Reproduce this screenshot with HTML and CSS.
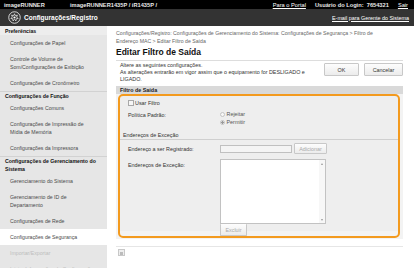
FILE: index.html
```html
<!DOCTYPE html>
<html lang="pt-br">
<head>
    <meta charset="UTF-8">
    <meta name="viewport" content="width=device-width, initial-scale=1.0">
    <title>Editar Filtro de Saída</title>
    <link rel="stylesheet" href="styles.css">
</head>
<body>
    <div class="topbar">
        <span class="model">imageRUNNER</span>
        <span class="device">imageRUNNER1435P / iR1435P /</span>
        <div class="top-links">
            <a href="#">Para o Portal</a>
            <span class="user">Usuário do Login: &nbsp;7654321</span>
            <a href="#">Sair</a>
        </div>
    </div>
    <div class="titlebar">
        <svg class="logo" width="13" height="13" viewBox="0 0 26 26">
            <circle cx="13" cy="13" r="11.5" fill="none" stroke="#fff" stroke-width="1.6"/>
            <path d="M13 5.5 L14.6 9.4 L18.8 8.2 L17.2 12.2 L20.5 15 L16.3 15.6 L15.9 19.8 L13 16.8 L10.1 19.8 L9.7 15.6 L5.5 15 L8.8 12.2 L7.2 8.2 L11.4 9.4 Z" fill="none" stroke="#fff" stroke-width="1.4" stroke-linejoin="round"/>
            <circle cx="13" cy="13" r="2.2" fill="#fff"/>
        </svg>
        <span class="app-title">Configurações/Registro</span>
        <a class="mail-link" href="#">E-mail para Gerente do Sistema</a>
    </div>

    <div class="layout">
        <nav class="sidebar">
            <div class="nav-head first">Preferências</div>
            <div class="nav-item">Configurações de Papel</div>
            <div class="nav-item">Controle de Volume de<br>Som/Configurações de Exibição</div>
            <div class="nav-item">Configurações de Cronômetro</div>
            <div class="nav-head">Configurações de Função</div>
            <div class="nav-item">Configurações Comuns</div>
            <div class="nav-item">Configurações de Impressão de<br>Mídia de Memória</div>
            <div class="nav-item">Configurações da Impressora</div>
            <div class="nav-head">Configurações de Gerenciamento do<br>Sistema</div>
            <div class="nav-item">Gerenciamento do Sistema</div>
            <div class="nav-item">Gerenciamento de ID de<br>Departamento</div>
            <div class="nav-item">Configurações de Rede</div>
            <div class="nav-item active">Configurações de Segurança</div>
            <div class="nav-item disabled">Importar/Exportar</div>
            <div class="nav-item disabled">Iniciar Informações da Configuração</div>
        </nav>

        <main class="main">
            <p class="crumbs">Configurações/Registro: Configurações de Gerenciamento do Sistema: Configurações de Segurança &gt; Filtro de<br>Endereço MAC &gt; Editar Filtro de Saída</p>
            <h1 class="page-title">Editar Filtro de Saída</h1>

            <div class="intro">
                <p>Altere as seguintes configurações.<br>As alterações entrarão em vigor assim que o equipamento for DESLIGADO e<br>LIGADO.</p>
                <div class="intro-buttons">
                    <button class="btn btn-ok">OK</button>
                    <button class="btn btn-cancel">Cancelar</button>
                </div>
            </div>

            <div class="section-bar">Filtro de Saída</div>
            <div class="section-body">
                <div class="highlight">
                    <label class="check-row"><span class="checkbox"></span>Usar Filtro</label>

                    <div class="form-row policy">
                        <span class="form-label">Política Padrão:</span>
                        <div class="radios">
                            <div class="radio-line"><span class="radio"></span>Rejeitar</div>
                            <div class="radio-line"><span class="radio checked"></span>Permitir</div>
                        </div>
                    </div>

                    <div class="sub-head">Endereços de Exceção</div>

                    <div class="form-row address">
                        <span class="form-label">Endereço a ser Registrado:</span>
                        <span class="text-input"></span>
                        <button class="btn btn-small">Adicionar</button>
                    </div>

                    <div class="form-row exceptions">
                        <span class="form-label">Endereços de Exceção:</span>
                        <div class="list-col">
                            <div class="list-box">
                                <div class="list-area"></div>
                                <div class="scroll">
                                    <span class="arrow up"></span>
                                    <span class="arrow down"></span>
                                </div>
                            </div>
                            <button class="btn btn-delete">Excluir</button>
                        </div>
                    </div>
                </div>
            </div>

            <div class="page-foot">
                <span class="top-icon"></span>
            </div>
        </main>
    </div>
</body>
</html>
```

FILE: styles.css
```css
* {
    box-sizing: border-box;
    margin: 0;
    padding: 0;
}
body {
    font-family: "Liberation Sans", Arial, sans-serif;
    font-size: 5.4px;
    color: #333;
    background-color: #fff;
    width: 414px;
    height: 268px;
    overflow: hidden;
}
a {
    color: #fff;
}

/* barra superior */
.topbar {
    height: 9px;
    background-color: #000;
    color: #e8e8e8;
    display: flex;
    align-items: center;
    padding: 0 6px 0 4px;
    font-size: 5.7px;
    font-weight: bold;
}
.model {
    width: 66px;
}
.top-links {
    margin-left: auto;
    display: flex;
    gap: 9px;
    font-weight: normal;
}
.user {
    font-weight: bold;
}
.titlebar {
    height: 17px;
    background-color: #333;
    color: #fff;
    display: flex;
    align-items: center;
    padding: 0 5px 0 8px;
}
.logo {
    margin-right: 3px;
}
.app-title {
    font-size: 6.5px;
    font-weight: bold;
}
.mail-link {
    margin-left: auto;
    font-size: 5.4px;
}

/* menu lateral */
.layout {
    display: flex;
    height: 242px;
}
.sidebar {
    width: 107px;
    flex-shrink: 0;
    background-color: #e6e6e6;
    color: #4a4a4a;
    font-size: 5.2px;
}
.nav-head {
    font-weight: bold;
    color: #111;
    line-height: 8px;
    padding: 0 2px 0 5px;
    border-top: 1px solid #d2d2d2;
}
.nav-head.first {
    border-top: none;
    padding-top: 1px;
    background-color: #ededed;
}
.nav-item {
    line-height: 8px;
    padding: 4px 2px 4px 10px;
    white-space: nowrap;
}
.nav-item.active {
    background-color: #fff;
}
.nav-item.disabled {
    color: #bdbdbd;
}

/* conteudo */
.main {
    flex: 1;
    padding: 3px 11px 0 9px;
}
.crumbs {
    color: #666;
    line-height: 8px;
    font-size: 5.2px;
}
.page-title {
    margin-top: 2px;
    font-size: 8.5px;
    color: #111;
    line-height: 11px;
    padding-bottom: 2px;
    border-bottom: 1px solid #ddd;
}
.intro {
    display: flex;
    justify-content: space-between;
    margin-top: 1px;
    padding-left: 4px;
    line-height: 7px;
}
.intro-buttons {
    display: flex;
    gap: 5px;
    padding-top: 1px;
}
.btn {
    font-family: "Liberation Sans", Arial, sans-serif;
    font-size: 5.4px;
    color: #333;
    background: linear-gradient(#fdfdfd, #ececec);
    border: 1px solid #c8c8c8;
    border-radius: 1px;
}
.btn-ok {
    width: 35px;
    height: 13px;
}
.btn-cancel {
    width: 39px;
    height: 13px;
}
.section-bar {
    margin-top: 3px;
    height: 8px;
    line-height: 8px;
    background-color: #d9d9d9;
    font-weight: bold;
    color: #222;
    padding-left: 4px;
}
.section-body {
    background-color: #f3f3f3;
    padding: 0 3px 1px 2px;
}
.highlight {
    border: 2px solid #f39a1e;
    border-radius: 5px;
    background: linear-gradient(#eee, #eee) top / 100% calc(100% - 5px) no-repeat, #f3f3f3;
    padding: 2px 0 0;
}
.check-row {
    display: flex;
    align-items: center;
    height: 9px;
    padding-left: 8px;
}
.checkbox {
    width: 6px;
    height: 6px;
    border: 1px solid #a8a8a8;
    background-color: #f6f6f6;
    margin-right: 1px;
}
.form-row {
    display: flex;
    padding-left: 8px;
}
.form-label {
    width: 92px;
    flex-shrink: 0;
}
.policy {
    margin-top: 3px;
}
.policy .form-label {
    padding-top: 2px;
}
.radios {
    color: #555;
}
.radio-line {
    display: flex;
    align-items: center;
    height: 8px;
}
.radio {
    width: 5px;
    height: 5px;
    border: 1px solid #c4c4c4;
    border-radius: 50%;
    background-color: #f8f8f8;
    margin-right: 1.5px;
}
.radio.checked {
    background: radial-gradient(circle, #999 0 1px, #f0f0f0 1.2px);
}
.sub-head {
    margin-top: 5px;
    line-height: 8px;
    padding-left: 3px;
    border-bottom: 1px solid #cfcfcf;
}
.address {
    margin-top: 3px;
    align-items: center;
    height: 11px;
}
.text-input {
    width: 72px;
    height: 8px;
    border: 1px solid #c0c0c0;
    background-color: #f4f4f4;
}
.btn-small {
    margin-left: 2px;
    width: 33px;
    height: 11px;
    color: #aaa;
}
.exceptions {
    margin-top: 5px;
}
.exceptions .form-label {
    padding-top: 3px;
}
.list-col {
    display: flex;
    flex-direction: column;
    align-items: flex-start;
}
.list-box {
    display: flex;
    width: 106px;
    height: 65px;
    border: 1px solid #c2c2c2;
    background-color: #fff;
}
.list-area {
    flex: 1;
}
.scroll {
    width: 6px;
    display: flex;
    flex-direction: column;
    justify-content: space-between;
    align-items: center;
    padding: 3px 0 2px;
    background-color: #f7f7f7;
}
.arrow {
    width: 0;
    height: 0;
    border-left: 1.5px solid transparent;
    border-right: 1.5px solid transparent;
}
.arrow.up {
    border-bottom: 2px solid #999;
}
.arrow.down {
    border-top: 2px solid #999;
}
.btn-delete {
    width: 27px;
    height: 12px;
    color: #aaa;
    border-top: none;
}
.page-foot {
    margin-top: 7px;
    border-top: 1px solid #e6e6e6;
    padding: 2px 0 0 2px;
}
.top-icon {
    display: block;
    width: 7px;
    height: 7px;
    border: 1px solid #c8c8c8;
    background: linear-gradient(#999, #999) center 1.5px / 3px 0.6px no-repeat,
                linear-gradient(#999, #999) center 3px / 3px 0.6px no-repeat,
                linear-gradient(#999, #999) center 4.3px / 3px 0.6px no-repeat,
                #eee;
}
```
